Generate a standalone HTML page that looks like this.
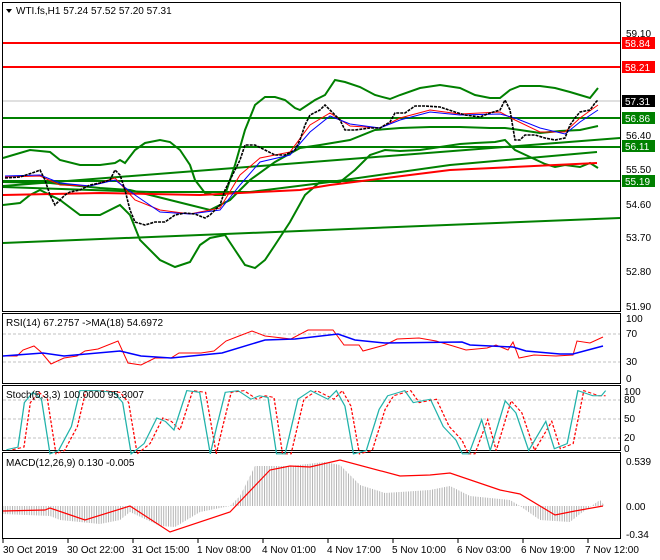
<!DOCTYPE html><html><head><style>
body{margin:0;background:#fff;width:660px;height:560px;overflow:hidden}
svg{display:block}
text{font-family:"Liberation Sans",sans-serif;font-size:10px;fill:#000}
</style></head><body>
<svg width="660" height="560" viewBox="0 0 660 560">
<defs><pattern id="hb" width="2.4" height="10" patternUnits="userSpaceOnUse"><rect x="0" y="0" width="1" height="10" fill="#b4b4b4"/></pattern></defs>
<rect width="660" height="560" fill="#fff"/>
<g fill="none" stroke="#000" stroke-width="1">
<rect x="2.5" y="2.5" width="618" height="309"/>
<rect x="2.5" y="313.5" width="618" height="70"/>
<rect x="2.5" y="385.5" width="618" height="65"/>
<rect x="2.5" y="452.5" width="618" height="86"/>
</g>
<line x1="3" y1="101" x2="620" y2="101" stroke="#c0c0c0"/>
<line x1="3" y1="43" x2="620" y2="43" stroke="#f00" stroke-width="2"/>
<line x1="3" y1="67" x2="620" y2="67" stroke="#f00" stroke-width="2"/>
<g stroke="#008000" stroke-width="2" fill="none">
<line x1="3" y1="118" x2="620" y2="118"/>
<line x1="3" y1="147" x2="620" y2="147"/>
<line x1="3" y1="181" x2="620" y2="181"/>
<line x1="3" y1="243" x2="620" y2="218"/>
<line x1="3" y1="186" x2="620" y2="138"/>
<polyline points="3,187 150,192 250,192 330,182 450,165 597,152"/>
<polyline points="3,158 30,150 50,152 60,160 80,165 100,165 115,163 120,160 125,163 135,150 145,143 160,140 170,142 180,150 190,165 195,180 205,193 215,195 225,195 235,165 245,130 255,105 265,97 275,97 285,100 295,108 300,110 315,100 325,95 335,80 345,82 360,87 375,95 390,99 400,95 420,88 440,85 460,88 475,95 490,98 500,98 510,90 520,86 540,86 555,88 570,92 580,95 590,98 598,88"/>
<polyline points="3,205 20,203 30,195 40,190 60,200 80,215 100,215 120,205 130,215 140,240 160,260 175,267 190,262 200,245 210,238 225,235 235,250 245,265 255,268 265,260 275,245 290,222 305,195 320,182 340,182 355,170 370,155 385,150 400,151 420,150 440,147 460,144 475,143 495,142 505,140 515,150 530,157 545,164 555,167 565,165 580,167 590,163 598,168"/>
<polyline points="3,182 50,183 70,185 100,188 130,190 150,195 170,200 190,205 210,210 230,200 250,180 275,162 300,148 320,145 350,140 375,130 400,128 430,127 460,127 490,128 505,128 520,130 540,133 560,131 580,130 598,126"/>
</g>
<polyline points="3,195 100,193 200,195 300,190 330,185 450,170 597,163" fill="none" stroke="#f00" stroke-width="2"/>
<polyline points="5,177 40,176 60,185 90,186 115,178 135,200 160,210 190,214 220,208 240,175 260,158 290,152 310,125 330,113 350,126 380,128 400,118 430,110 460,114 500,112 515,120 540,132 565,132 580,118 598,105" fill="none" stroke="#f00" stroke-width="1"/>
<polyline points="5,176 40,175 60,183 90,186 115,180 135,195 160,212 190,214 220,210 240,185 260,162 290,155 310,132 330,116 350,124 380,128 400,120 430,112 460,115 500,114 515,118 540,128 565,134 580,122 598,110" fill="none" stroke="#00f" stroke-width="1"/>
<polyline points="5,178 20,177 35,172 40,170 45,180 50,195 55,205 60,200 65,195 70,192 80,190 90,185 100,183 110,180 115,170 120,175 125,190 130,210 135,222 145,225 155,222 165,222 175,215 185,213 195,214 205,218 210,215 215,210 220,205 225,190 230,180 240,160 245,145 255,145 265,150 275,155 285,155 295,150 300,140 305,125 310,115 320,110 325,105 330,110 340,120 345,130 355,130 370,128 380,128 390,122 395,113 405,113 415,106 425,106 440,107 455,112 465,115 480,117 490,113 500,110 505,100 510,110 515,140 520,140 525,135 535,135 545,138 555,140 565,138 570,125 575,118 580,112 590,110 595,103 598,100" fill="none" stroke="#000" stroke-width="1.6" stroke-dasharray="3,1"/>
<g>
<text x="626" y="37">59.10</text><text x="626" y="139">56.40</text><text x="626" y="173">55.50</text><text x="626" y="208">54.60</text><text x="626" y="241">53.70</text><text x="626" y="275">52.80</text><text x="626" y="310">51.90</text>
<rect x="622" y="37" width="33" height="12" fill="#f00"/><text x="625" y="47" style="fill:#fff">58.84</text>
<rect x="622" y="61" width="33" height="12" fill="#f00"/><text x="625" y="71" style="fill:#fff">58.21</text>
<rect x="622" y="95" width="33" height="12" fill="#000"/><text x="625" y="105" style="fill:#fff">57.31</text>
<rect x="622" y="112" width="33" height="12" fill="#008000"/><text x="625" y="122" style="fill:#fff">56.86</text>
<rect x="622" y="140" width="33" height="12" fill="#008000"/><text x="625" y="150" style="fill:#fff">56.11</text>
<rect x="622" y="175" width="33" height="12" fill="#008000"/><text x="625" y="185" style="fill:#fff">55.19</text>
</g>
<path d="M6,9 L12,9 L9,13 Z" fill="#000"/>
<text x="16" y="14">WTI.fs,H1  57.24 57.52 57.20 57.31</text>
<g stroke="#c0c0c0" stroke-dasharray="3,2"><line x1="3" y1="334" x2="620" y2="334"/><line x1="3" y1="362" x2="620" y2="362"/></g>
<polyline fill="none" stroke="#f00" points="3,356 17,356 23,350 34,346 41,352 51,364 64,358 77,356 85,351 98,349 118,341 128,363 141,365 155,358 171,358 179,353 201,353 214,351 226,341 239,336 252,331 265,336 291,339 308,330 333,330 344,345 359,345 363,351 385,345 397,339 419,338 436,341 453,346 466,350 487,348 496,345 508,350 513,342 519,358 534,355 556,356 573,355 577,341 590,343 603,337"/>
<polyline fill="none" stroke="#00f" stroke-width="1.5" points="3,356 43,353 64,356 120,351 141,356 171,358 222,353 265,340 295,339 338,334 355,340 385,343 462,342 470,345 513,347 526,351 560,354 573,354 603,346"/>
<text x="6" y="326">RSI(14) 67.2757  -&gt;MA(18) 54.6972</text>
<text x="626" y="322">100</text><text x="626" y="337">70</text><text x="626" y="365">30</text><text x="626" y="382">0</text>
<g stroke="#c0c0c0" stroke-dasharray="3,2"><line x1="3" y1="400" x2="620" y2="400"/><line x1="3" y1="419" x2="620" y2="419"/><line x1="3" y1="438" x2="620" y2="438"/></g>
<g transform="translate(3,300) scale(0.4274,0.342)">
<polyline fill="none" stroke="#f00" stroke-width="3" stroke-dasharray="8,5" transform="translate(14,0)" points="8,438 35,430 50,300 70,270 90,290 110,450 130,440 160,370 180,265 220,265 260,270 280,300 300,450 330,420 360,345 380,355 400,380 430,265 460,270 485,450 500,370 520,270 550,265 580,290 600,280 620,285 640,450 660,450 690,290 720,265 760,290 780,265 800,310 820,450 850,440 880,320 900,280 940,265 960,300 1000,290 1030,370 1060,410 1075,450 1090,450 1120,350 1140,440 1175,295 1200,330 1230,440 1270,355 1290,435 1320,420 1345,265 1380,280 1396,280"/>
<polyline fill="none" stroke="#20b2aa" stroke-width="3" points="8,438 35,430 50,300 70,270 90,290 110,450 130,440 160,370 180,265 220,265 260,270 280,300 300,450 330,420 360,345 380,355 400,380 430,265 460,270 485,450 500,370 520,270 550,265 580,290 600,280 620,285 640,450 660,450 690,290 720,265 760,290 780,265 800,310 820,450 850,440 880,320 900,280 940,265 960,300 1000,290 1030,370 1060,410 1075,450 1090,450 1120,350 1140,440 1175,295 1200,330 1230,440 1270,355 1290,435 1320,420 1345,265 1380,280 1400,280 1410,265"/>
</g>
<text x="6" y="398">Stoch(5,3,3) 100.0000 95.3007</text>
<text x="624" y="395">100</text><text x="624" y="403">80</text><text x="624" y="422">50</text><text x="624" y="441">20</text><text x="624" y="452">0</text>
<polygon fill="url(#hb)" points="3,506 3,514 50,516 60,520 100,524 120,520 130,512 160,526 175,527 200,512 230,506 240,496 255,466 290,466 325,462 340,465 360,485 385,493 430,490 450,486 470,496 510,500 520,506 540,520 570,522 580,514 600,500 605,506"/>
<polyline fill="none" stroke="#f00" stroke-width="1.2" points="3,511 45,510 50,508 85,520 130,506 170,532 230,512 270,470 290,466 310,467 340,460 400,476 430,475 450,473 500,490 520,494 555,515 575,511 603,506"/>
<text x="6" y="466">MACD(12,26,9) 0.130 -0.005</text>
<text x="626" y="465">0.539</text><text x="626" y="510">0.00</text><text x="626" y="538">-0.34</text>
<g stroke="#000"><line x1="3" y1="539" x2="3" y2="543"/><line x1="68" y1="539" x2="68" y2="543"/><line x1="133" y1="539" x2="133" y2="543"/><line x1="198" y1="539" x2="198" y2="543"/><line x1="263" y1="539" x2="263" y2="543"/><line x1="328" y1="539" x2="328" y2="543"/><line x1="393" y1="539" x2="393" y2="543"/><line x1="458" y1="539" x2="458" y2="543"/><line x1="523" y1="539" x2="523" y2="543"/><line x1="588" y1="539" x2="588" y2="543"/></g>
<text x="3" y="553">30 Oct 2019</text><text x="67" y="553">30 Oct 22:00</text><text x="132" y="553">31 Oct 15:00</text><text x="197" y="553">1 Nov 08:00</text><text x="262" y="553">4 Nov 01:00</text><text x="327" y="553">4 Nov 17:00</text><text x="392" y="553">5 Nov 10:00</text><text x="457" y="553">6 Nov 03:00</text><text x="521" y="553">6 Nov 19:00</text><text x="585" y="553">7 Nov 12:00</text>
</svg></body></html>
